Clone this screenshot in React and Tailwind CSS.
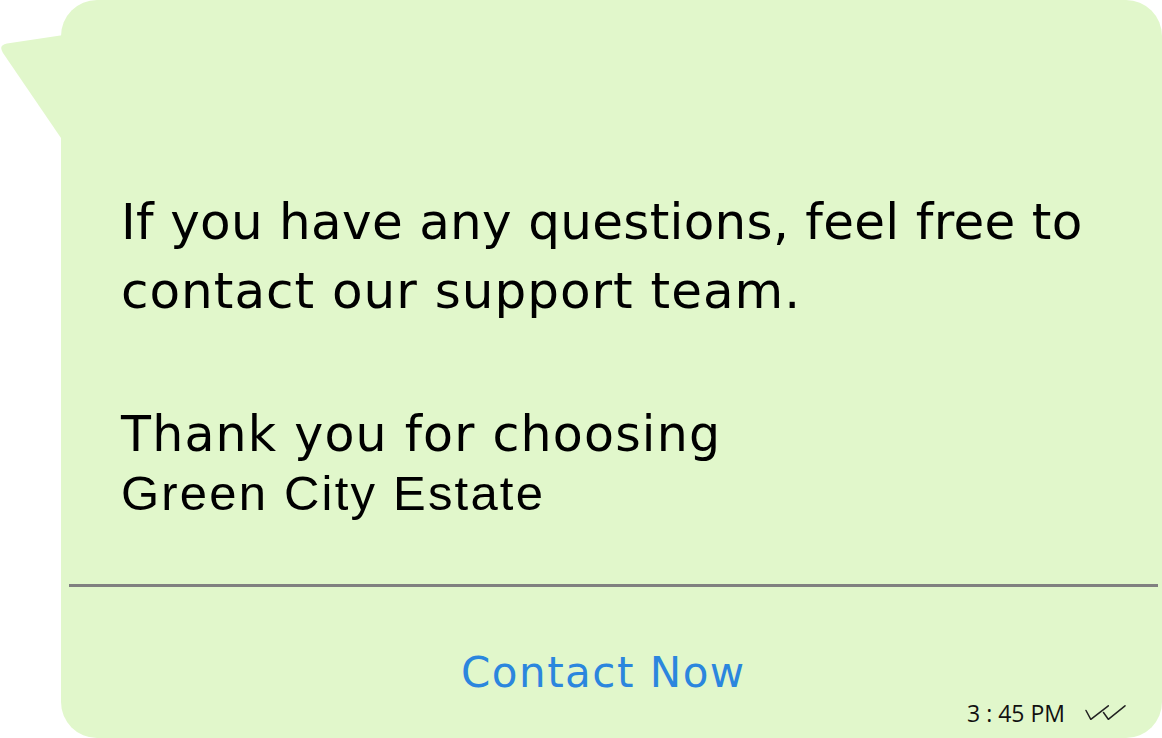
export default function App() {
  return (
    <div className="w-[1162px] h-[738px] bg-white flex overflow-hidden">
      <svg width="62" height="145" viewBox="0 0 62 145" className="shrink-0 -mr-px">
        <path d="M63 35 L7 43.5 Q-2 45 3 53 L63 141 Z" fill="#E1F7CB" />
      </svg>
      <div className="flex-1 bg-[#E1F7CB] rounded-[36px] flex flex-col">
        <div
          className="pt-[188px] pl-[60px] text-black text-[50px] leading-[69px] tracking-[0.3px]"
          style={{ fontFamily: '"DejaVu Sans", sans-serif' }}
        >
          <div>If you have any questions, feel free to</div>
          <div className="tracking-[1px]">contact our support team.</div>
        </div>
        <div className="mt-[80px] pl-[60px] text-black">
          <div
            className="text-[49px] leading-[58px] tracking-[1.2px]"
            style={{ fontFamily: '"DejaVu Sans", sans-serif' }}
          >
            Thank you for choosing
          </div>
          <div
            className="text-[49px] leading-[58px] tracking-[2.2px]"
            style={{ fontFamily: '"Liberation Sans", Arial, sans-serif' }}
          >
            Green City Estate
          </div>
        </div>
        <div className="mt-[62px] ml-[8px] mr-[4px] h-[3px] bg-[#808080]" />
        <div
          className="mt-[62px] pl-[400px] text-[42px] leading-[48px] tracking-[1.5px] text-[#2B86DE]"
          style={{ fontFamily: '"DejaVu Sans", sans-serif' }}
        >
          Contact Now
        </div>
        <div className="mt-[4px] flex justify-end items-center pr-[36px] gap-[20px]">
          <span
            className="text-[23px] leading-[24px] text-[#111]"
            style={{ fontFamily: '"Open Sans", sans-serif' }}
          >
            3 : 45 PM
          </span>
          <svg width="41" height="16" viewBox="0 0 41 16" fill="none" stroke="#222" strokeWidth="1.5" strokeLinecap="round" strokeLinejoin="round">
            <path d="M1 5.5 L5.8 14.3 L23.3 0.8" />
            <path d="M18.5 7.5 L23.3 14.3 L40 0.8" />
          </svg>
        </div>
      </div>
    </div>
  );
}
